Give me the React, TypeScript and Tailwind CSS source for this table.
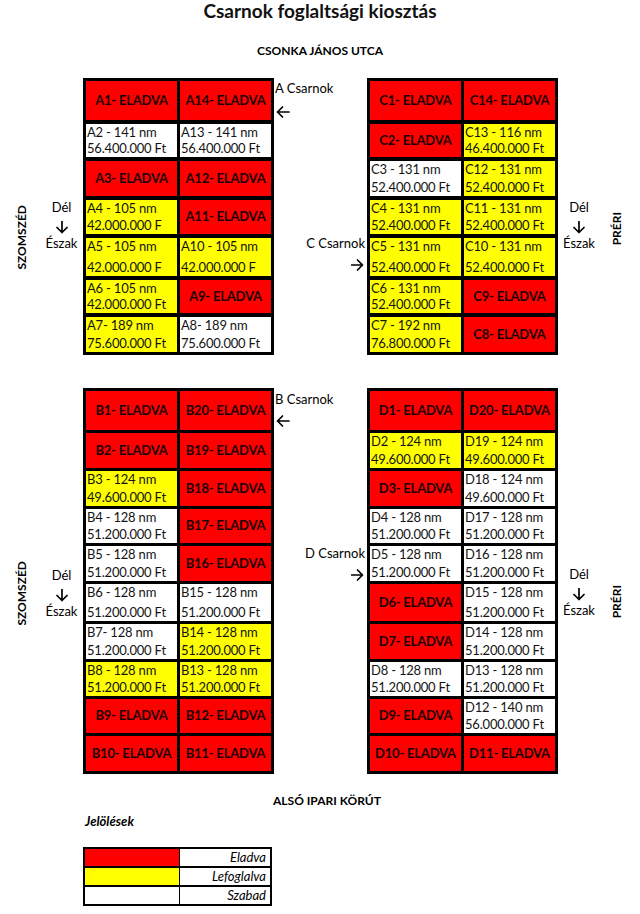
import React from 'react';
import clsx from 'clsx';

type Kind = 'sold' | 'reserved' | 'free';
type Cell = { id: string; kind: Kind; l1?: string; l2?: string };

const sold = (id: string): Cell => ({ id, kind: 'sold' });
const res = (id: string, l1: string, l2: string): Cell => ({ id, kind: 'reserved', l1, l2 });
const free = (id: string, l1: string, l2: string): Cell => ({ id, kind: 'free', l1, l2 });

const A_ROWS: Cell[][] = [
  [sold('A1'), sold('A14')],
  [free('A2', 'A2 - 141 nm', '56.400.000 Ft'), free('A13', 'A13 - 141 nm', '56.400.000 Ft')],
  [sold('A3'), sold('A12')],
  [res('A4', 'A4 - 105 nm', '42.000.000 F'), sold('A11')],
  [res('A5', 'A5 - 105 nm', '42.000.000 F'), res('A10', 'A10 - 105 nm', '42.000.000 F')],
  [res('A6', 'A6 - 105 nm', '42.000.000 Ft'), sold('A9')],
  [res('A7', 'A7- 189 nm', '75.600.000 Ft'), free('A8', 'A8- 189 nm', '75.600.000 Ft')],
];

const C_ROWS: Cell[][] = [
  [sold('C1'), sold('C14')],
  [sold('C2'), res('C13', 'C13 - 116 nm', '46.400.000 Ft')],
  [free('C3', 'C3 - 131 nm', '52.400.000 Ft'), res('C12', 'C12 - 131 nm', '52.400.000 Ft')],
  [res('C4', 'C4 - 131 nm', '52.400.000 Ft'), res('C11', 'C11 - 131 nm', '52.400.000 Ft')],
  [res('C5', 'C5 - 131 nm', '52.400.000 Ft'), res('C10', 'C10 - 131 nm', '52.400.000 Ft')],
  [res('C6', 'C6 - 131 nm', '52.400.000 Ft'), sold('C9')],
  [res('C7', 'C7 - 192 nm', '76.800.000 Ft'), sold('C8')],
];

const B_ROWS: Cell[][] = [
  [sold('B1'), sold('B20')],
  [sold('B2'), sold('B19')],
  [res('B3', 'B3 - 124 nm', '49.600.000 Ft'), sold('B18')],
  [free('B4', 'B4 - 128 nm', '51.200.000 Ft'), sold('B17')],
  [free('B5', 'B5 - 128 nm', '51.200.000 Ft'), sold('B16')],
  [free('B6', 'B6 - 128 nm', '51.200.000 Ft'), free('B15', 'B15 - 128 nm', '51.200.000 Ft')],
  [free('B7', 'B7- 128 nm', '51.200.000 Ft'), res('B14', 'B14 - 128 nm', '51.200.000 Ft')],
  [res('B8', 'B8 - 128 nm', '51.200.000 Ft'), res('B13', 'B13 - 128 nm', '51.200.000 Ft')],
  [sold('B9'), sold('B12')],
  [sold('B10'), sold('B11')],
];

const D_ROWS: Cell[][] = [
  [sold('D1'), sold('D20')],
  [res('D2', 'D2 - 124 nm', '49.600.000 Ft'), res('D19', 'D19 - 124 nm', '49.600.000 Ft')],
  [sold('D3'), free('D18', 'D18 - 124 nm', '49.600.000 Ft')],
  [free('D4', 'D4 - 128 nm', '51.200.000 Ft'), free('D17', 'D17 - 128 nm', '51.200.000 Ft')],
  [free('D5', 'D5 - 128 nm', '51.200.000 Ft'), free('D16', 'D16 - 128 nm', '51.200.000 Ft')],
  [sold('D6'), free('D15', 'D15 - 128 nm', '51.200.000 Ft')],
  [sold('D7'), free('D14', 'D14 - 128 nm', '51.200.000 Ft')],
  [free('D8', 'D8 - 128 nm', '51.200.000 Ft'), free('D13', 'D13 - 128 nm', '51.200.000 Ft')],
  [sold('D9'), free('D12', 'D12 - 140 nm', '56.000.000 Ft')],
  [sold('D10'), sold('D11')],
];

const Unit = ({ cell }: { cell: Cell }) => {
  if (cell.kind === 'sold') {
    return (
      <div className="flex items-center justify-center bg-[#ff0000] text-[13px] font-bold tracking-[-0.2px] text-[#1a0000]">
        {cell.id}- ELADVA
      </div>
    );
  }
  return (
    <div
      className={clsx(
        'flex flex-col justify-between overflow-hidden whitespace-nowrap pl-[1px] pb-[1px] text-[13px] leading-[16px] tracking-[-0.2px] text-[#141414]',
        cell.kind === 'reserved' ? 'bg-[#ffff00]' : 'bg-white'
      )}
    >
      <span>{cell.l1}</span>
      <span>{cell.l2}</span>
    </div>
  );
};

const Block = ({ rows, small }: { rows: Cell[][]; small?: boolean }) => (
  <div
    className={clsx(
      'grid grid-cols-[91px_91px] gap-x-[3px] bg-black p-[3px]',
      small
        ? 'grid-rows-[39px_35px_35px_34px_35px_37px_35px_34px_34px_35px] gap-y-[3px]'
        : 'grid-rows-[39px_33px_35px_34px_38px_33px_35px] gap-y-[4px]'
    )}
  >
    {rows.flat().map((c) => (
      <Unit key={c.id} cell={c} />
    ))}
  </div>
);

const ArrowLeft = () => (
  <svg width="14" height="12" viewBox="0 0 14 12" fill="none" stroke="#000" strokeWidth="1.7" strokeLinecap="round" strokeLinejoin="round">
    <path d="M13 6H1.5M6.5 1L1.5 6L6.5 11" />
  </svg>
);

const ArrowRight = () => (
  <svg width="13" height="12" viewBox="0 0 13 12" fill="none" stroke="#000" strokeWidth="1.7" strokeLinecap="round" strokeLinejoin="round">
    <path d="M0.5 6H11.5M6.5 1L11.5 6L6.5 11" />
  </svg>
);

const ArrowDown = () => (
  <svg width="12" height="13" viewBox="0 0 12 13" fill="none" stroke="#000" strokeWidth="1.7" strokeLinecap="round" strokeLinejoin="round">
    <path d="M6 0.5V11.5M1 6.5L6 11.5L11 6.5" />
  </svg>
);

const Compass = ({ top }: { top: string }) => (
  <div className={clsx('flex flex-col items-center text-[13px] leading-[16px]', top)}>
    <span>Dél</span>
    <div className="h-[20px] pt-[6px]">
      <ArrowDown />
    </div>
    <span>Észak</span>
  </div>
);

const Side = ({ text, top }: { text: string; top: string }) => (
  <div className={clsx('rotate-180 text-[12px] font-bold leading-[14px] [writing-mode:vertical-rl]', top)}>
    {text}
  </div>
);

const App = () => {
  return (
    <div className="relative h-[914px] w-[640px] overflow-hidden bg-white font-['Lato',sans-serif] text-black">
      <h1 className="text-center text-[19px] font-bold leading-[22px] text-[#111]">Csarnok foglaltsági kiosztás</h1>
      <div className="mt-[21px] text-center text-[12px] font-bold leading-[16px]">CSONKA JÁNOS UTCA</div>

      {/* felső sor: A és C csarnok */}
      <div className="mt-[19px] grid grid-cols-[83px_191px_93px_191px_82px]">
        <div className="flex">
          <div className="flex w-[44px] flex-col items-center">
            <Side text="SZOMSZÉD" top="mt-[127px]" />
          </div>
          <div className="w-[35px]">
            <Compass top="mt-[121px]" />
          </div>
        </div>
        <Block rows={A_ROWS} />
        <div className="flex flex-col text-[13px] leading-[16px]">
          <span className="mt-[2px] pl-[1px]">A Csarnok</span>
          <div className="mt-[10px] pl-[2px]">
            <ArrowLeft />
          </div>
          <span className="mt-[117px] pr-[2px] text-right">C Csarnok</span>
          <div className="mt-[8px] flex justify-end pr-[3px]">
            <ArrowRight />
          </div>
        </div>
        <Block rows={C_ROWS} />
        <div className="flex">
          <div className="w-[42px]">
            <Compass top="mt-[121px]" />
          </div>
          <div className="flex w-[34px] flex-col items-center">
            <Side text="PRÉRI" top="mt-[134px]" />
          </div>
        </div>
      </div>

      {/* alsó sor: B és D csarnok */}
      <div className="mt-[33px] grid grid-cols-[83px_191px_93px_191px_82px]">
        <div className="flex">
          <div className="flex w-[44px] flex-col items-center">
            <Side text="SZOMSZÉD" top="mt-[173px]" />
          </div>
          <div className="w-[35px]">
            <Compass top="mt-[179px]" />
          </div>
        </div>
        <Block rows={B_ROWS} small />
        <div className="flex flex-col text-[13px] leading-[16px]">
          <span className="mt-[3px] pl-[1px]">B Csarnok</span>
          <div className="mt-[8px] pl-[2px]">
            <ArrowLeft />
          </div>
          <span className="mt-[118px] pr-[2px] text-right">D Csarnok</span>
          <div className="mt-[8px] flex justify-end pr-[3px]">
            <ArrowRight />
          </div>
        </div>
        <Block rows={D_ROWS} small />
        <div className="flex">
          <div className="w-[42px]">
            <Compass top="mt-[178px]" />
          </div>
          <div className="flex w-[34px] flex-col items-center">
            <Side text="PRÉRI" top="mt-[197px]" />
          </div>
        </div>
      </div>

      <div className="mt-[19px] pl-[273px] text-[12px] font-bold leading-[16px]">ALSÓ IPARI KÖRÚT</div>
      <div className="mt-[4px] pl-[85px] text-[13px] font-bold italic leading-[16px]">Jelölések</div>

      {/* jelmagyarázat */}
      <div className="ml-[83px] mt-[18px] grid w-[189px] grid-cols-[94px_1fr] grid-rows-[17px_17px_17px] gap-x-[1px] gap-y-[2px] border-2 border-black bg-black">
        <div className="bg-[#ff0000]" />
        <div className="bg-white pr-[4px] text-right text-[13px] italic leading-[17px]">Eladva</div>
        <div className="bg-[#ffff00]" />
        <div className="bg-white pr-[4px] text-right text-[13px] italic leading-[17px]">Lefoglalva</div>
        <div className="bg-white" />
        <div className="bg-white pr-[4px] text-right text-[13px] italic leading-[17px]">Szabad</div>
      </div>
    </div>
  );
};

export default App;
